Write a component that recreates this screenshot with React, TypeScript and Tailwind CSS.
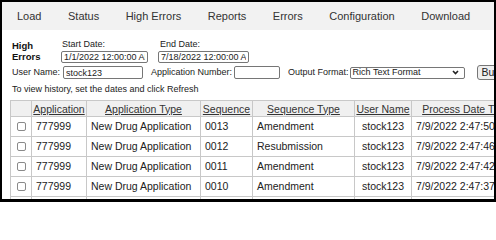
import React from "react";

const navItems = ["Load", "Status", "High Errors", "Reports", "Errors", "Configuration", "Download"];

const rows = [
  { app: "777999", type: "New Drug Application", seq: "0013", seqType: "Amendment", user: "stock123", date: "7/9/2022 2:47:50 PM" },
  { app: "777999", type: "New Drug Application", seq: "0012", seqType: "Resubmission", user: "stock123", date: "7/9/2022 2:47:46 PM" },
  { app: "777999", type: "New Drug Application", seq: "0011", seqType: "Amendment", user: "stock123", date: "7/9/2022 2:47:42 PM" },
  { app: "777999", type: "New Drug Application", seq: "0010", seqType: "Amendment", user: "stock123", date: "7/9/2022 2:47:37 PM" },
  { app: "777999", type: "New Drug Application", seq: "0009", seqType: "Amendment", user: "stock123", date: "7/9/2022 2:47:31 PM" },
];

const headers = ["Application", "Application Type", "Sequence", "Sequence Type", "User Name", "Process Date Time"];

const Checkbox = () => (
  <div className="mx-auto w-[9px] h-[9px] rounded-[2px] border border-[#8a8a8a] bg-white" />
);

const App = () => {
  return (
    <div className="w-[496px] h-[202px] overflow-hidden bg-white border-black border-l-2 border-t-2 border-r-2 border-b-[3px] font-['Liberation_Sans',Arial,sans-serif]">
      {/* top navigation */}
      <nav className="h-[28px] bg-[#f2f2f2] flex items-center pl-[15px] gap-[26.5px] text-[11px] text-[#333] whitespace-nowrap">
        {navItems.map((item) => (
          <span key={item}>{item}</span>
        ))}
      </nav>

      {/* search form */}
      <div className="pl-[10px] pt-[9px] text-[9px] text-[#222] whitespace-nowrap">
        <div className="flex items-start h-[24px]">
          <div className="w-[48px] font-bold text-[9.5px] leading-[11px] pt-[1px] text-[#111]">
            <div>High</div>
            <div>Errors</div>
          </div>
          <div className="flex flex-col">
            <span className="pl-[2px] leading-[11px]">Start Date:</span>
            <input
              readOnly
              defaultValue="1/1/2022 12:00:00 AM"
              className="ml-[1px] mt-[1px] w-[87px] h-[12px] border border-[#767676] rounded-[2px] px-[2px] text-[9px] leading-none text-[#222] outline-none"
            />
          </div>
          <div className="flex flex-col ml-[10px]">
            <span className="pl-[2px] leading-[11px]">End Date:</span>
            <input
              readOnly
              defaultValue="7/18/2022 12:00:00 AM"
              className="mt-[1px] w-[91px] h-[12px] border border-[#767676] rounded-[2px] px-[2px] text-[9px] leading-none text-[#222] outline-none"
            />
          </div>
        </div>

        <div className="flex items-center h-[15px] mt-[2px]">
          <span className="shrink-0">User Name:</span>
          <input
            readOnly
            defaultValue="stock123"
            className="shrink-0 ml-[3px] w-[80px] h-[13px] border border-[#767676] rounded-[2px] px-[2px] text-[9px] leading-none text-[#222] outline-none"
          />
          <span className="shrink-0 ml-[8px]">Application Number:</span>
          <input
            readOnly
            defaultValue=""
            className="shrink-0 ml-[2px] w-[46px] h-[13px] border border-[#767676] rounded-[2px] px-[2px] text-[9px] outline-none"
          />
          <span className="shrink-0 ml-[8px]">Output Format:</span>
          <div className="shrink-0 ml-[1px] w-[115px] h-[12px] border border-[#767676] rounded-[2px] flex items-center justify-between pl-[2px] pr-[5px]">
            <span>Rich Text Format</span>
            <svg width="7" height="5" viewBox="0 0 7 5">
              <path d="M1 1l2.5 2.5L6 1" fill="none" stroke="#222" strokeWidth="1.6" />
            </svg>
          </div>
          <button className="shrink-0 ml-[12px] h-[15px] px-[4px] border border-[#767676] rounded-[3px] bg-[#efefef] text-[10.5px] leading-none text-[#222]">
            Build
          </button>
        </div>

        <div className="mt-[3px] leading-[12px]">To view history, set the dates and click Refresh</div>
      </div>

      {/* results table */}
      <table className="ml-[8px] mt-[5px] table-fixed border-collapse w-[511px] text-[10.5px] text-[#222]">
        <colgroup>
          <col className="w-[21px]" />
          <col className="w-[55px]" />
          <col className="w-[114px]" />
          <col className="w-[52px]" />
          <col className="w-[102px]" />
          <col className="w-[57px]" />
          <col className="w-[110px]" />
        </colgroup>
        <thead>
          <tr className="h-[16px] bg-[#f0f0f0]">
            <th className="border border-[#c8c8c8]" />
            {headers.map((h) => (
              <th
                key={h}
                className="border border-[#c8c8c8] font-normal text-center text-[#333] underline whitespace-nowrap overflow-hidden leading-[14px]"
              >
                {h}
              </th>
            ))}
          </tr>
        </thead>
        <tbody>
          {rows.map((r) => (
            <tr key={r.seq} className="h-[20px]">
              <td className="border border-[#c8c8c8]">
                <Checkbox />
              </td>
              <td className="border border-[#c8c8c8] pl-[4px] whitespace-nowrap">{r.app}</td>
              <td className="border border-[#c8c8c8] pl-[4px] whitespace-nowrap">{r.type}</td>
              <td className="border border-[#c8c8c8] pl-[4px] whitespace-nowrap">{r.seq}</td>
              <td className="border border-[#c8c8c8] pl-[4px] whitespace-nowrap">{r.seqType}</td>
              <td className="border border-[#c8c8c8] text-center whitespace-nowrap">{r.user}</td>
              <td className="border border-[#c8c8c8] pl-[4px] whitespace-nowrap overflow-hidden">{r.date}</td>
            </tr>
          ))}
        </tbody>
      </table>
    </div>
  );
};

export default App;
